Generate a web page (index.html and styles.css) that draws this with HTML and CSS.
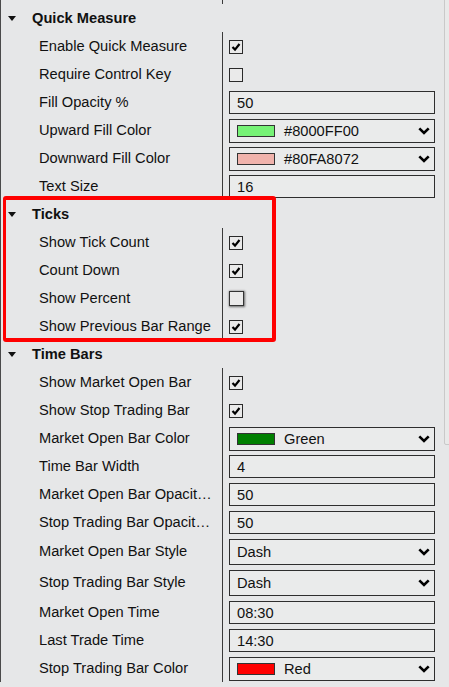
FILE: index.html
```html
<!DOCTYPE html>
<html>
<head>
<meta charset="utf-8">
<link rel="stylesheet" href="styles.css">
</head>
<body>
<div class="panel">
  <div class="rows">
    <div class="row prop stub"><div class="label"></div><div class="value"></div></div>

    <div class="row cat"><svg class="caret" width="8" height="5" viewBox="0 0 8 5"><polygon points="0,0 8,0 4,5"/></svg>Quick Measure</div>
    <div class="row prop"><div class="label">Enable Quick Measure</div><div class="value"><span class="check"><svg width="12" height="12" viewBox="0 0 12 12"><polyline points="2.5,6 5,8.6 9.5,3"/></svg></span></div></div>
    <div class="row prop"><div class="label">Require Control Key</div><div class="value"><span class="check"></span></div></div>
    <div class="row prop"><div class="label">Fill Opacity %</div><div class="value"><div class="field">50</div></div></div>
    <div class="row prop"><div class="label">Upward Fill Color</div><div class="value"><div class="field combo"><span class="swatch up"></span><span class="ctext">#8000FF00</span><svg class="chev" width="12" height="8" viewBox="0 0 12 8"><polyline points="1.3,1.3 6,6 10.7,1.3"/></svg></div></div></div>
    <div class="row prop"><div class="label">Downward Fill Color</div><div class="value"><div class="field combo"><span class="swatch down"></span><span class="ctext">#80FA8072</span><svg class="chev" width="12" height="8" viewBox="0 0 12 8"><polyline points="1.3,1.3 6,6 10.7,1.3"/></svg></div></div></div>
    <div class="row prop"><div class="label">Text Size</div><div class="value"><div class="field">16</div></div></div>

    <div class="row cat"><svg class="caret" width="8" height="5" viewBox="0 0 8 5"><polygon points="0,0 8,0 4,5"/></svg>Ticks</div>
    <div class="row prop"><div class="label">Show Tick Count</div><div class="value"><span class="check"><svg width="12" height="12" viewBox="0 0 12 12"><polyline points="2.5,6 5,8.6 9.5,3"/></svg></span></div></div>
    <div class="row prop"><div class="label">Count Down</div><div class="value"><span class="check"><svg width="12" height="12" viewBox="0 0 12 12"><polyline points="2.5,6 5,8.6 9.5,3"/></svg></span></div></div>
    <div class="row prop"><div class="label">Show Percent</div><div class="value"><span class="check focus"></span></div></div>
    <div class="row prop"><div class="label">Show Previous Bar Range</div><div class="value"><span class="check"><svg width="12" height="12" viewBox="0 0 12 12"><polyline points="2.5,6 5,8.6 9.5,3"/></svg></span></div></div>

    <div class="row cat"><svg class="caret" width="8" height="5" viewBox="0 0 8 5"><polygon points="0,0 8,0 4,5"/></svg>Time Bars</div>
    <div class="row prop"><div class="label">Show Market Open Bar</div><div class="value"><span class="check"><svg width="12" height="12" viewBox="0 0 12 12"><polyline points="2.5,6 5,8.6 9.5,3"/></svg></span></div></div>
    <div class="row prop"><div class="label">Show Stop Trading Bar</div><div class="value"><span class="check"><svg width="12" height="12" viewBox="0 0 12 12"><polyline points="2.5,6 5,8.6 9.5,3"/></svg></span></div></div>
    <div class="row prop"><div class="label">Market Open Bar Color</div><div class="value"><div class="field combo"><span class="swatch green"></span><span class="ctext">Green</span><svg class="chev" width="12" height="8" viewBox="0 0 12 8"><polyline points="1.3,1.3 6,6 10.7,1.3"/></svg></div></div></div>
    <div class="row prop"><div class="label">Time Bar Width</div><div class="value"><div class="field">4</div></div></div>
    <div class="row prop"><div class="label">Market Open Bar Opacit…</div><div class="value"><div class="field">50</div></div></div>
    <div class="row prop"><div class="label">Stop Trading Bar Opacit…</div><div class="value"><div class="field">50</div></div></div>
    <div class="row prop tall"><div class="label">Market Open Bar Style</div><div class="value"><div class="field combo big"><span class="ctext plain">Dash</span><svg class="chev" width="12" height="8" viewBox="0 0 12 8"><polyline points="1.3,1.3 6,6 10.7,1.3"/></svg></div></div></div>
    <div class="row prop tall"><div class="label">Stop Trading Bar Style</div><div class="value"><div class="field combo big"><span class="ctext plain">Dash</span><svg class="chev" width="12" height="8" viewBox="0 0 12 8"><polyline points="1.3,1.3 6,6 10.7,1.3"/></svg></div></div></div>
    <div class="row prop"><div class="label">Market Open Time</div><div class="value"><div class="field">08:30</div></div></div>
    <div class="row prop"><div class="label">Last Trade Time</div><div class="value"><div class="field">14:30</div></div></div>
    <div class="row prop"><div class="label">Stop Trading Bar Color</div><div class="value"><div class="field combo"><span class="swatch red"></span><span class="ctext">Red</span><svg class="chev" width="12" height="8" viewBox="0 0 12 8"><polyline points="1.3,1.3 6,6 10.7,1.3"/></svg></div></div></div>
  </div>
  <div class="thumb"></div>
  <div class="highlight"></div>
</div>
</body>
</html>
```

FILE: styles.css
```css
html, body {
  margin: 0;
  padding: 0;
  background: #e6e7e8;
  overflow: hidden;
}

body {
  font-family: "Liberation Sans", Arial, sans-serif;
  font-size: 14.67px;
  color: #111;
}

.panel {
  position: relative;
  width: 449px;
  height: 687px;
  overflow: hidden;
}

.rows {
  width: 444px;
  box-sizing: border-box;
  border-left: 1px solid #4a4a4a;
  display: flex;
  flex-direction: column;
}

.row {
  height: 28px;
  display: flex;
  align-items: stretch;
}

.row.stub {
  height: 4px;
}

.row.tall {
  height: 31px;
}

.cat {
  align-items: center;
  font-weight: bold;
}

.caret {
  margin-left: 7px;
  margin-right: 16px;
  fill: #111;
}

.label {
  width: 222px;
  flex: none;
  box-sizing: border-box;
  padding-left: 38px;
  padding-right: 6px;
  border-right: 1px solid #3a3a3a;
  white-space: nowrap;
  overflow: hidden;
  line-height: 28px;
}

.tall .label {
  line-height: 31px;
}

.value {
  flex: 1;
  display: flex;
  align-items: center;
  padding-left: 6px;
}

.check {
  width: 14px;
  height: 14px;
  box-sizing: border-box;
  border: 1px solid #2a2a2a;
  background: #eaeaea;
  display: flex;
  align-items: center;
  justify-content: center;
  margin-top: 1px;
}

.check svg polyline {
  fill: none;
  stroke: #000;
  stroke-width: 2.2;
}

.check.focus {
  width: 15px;
  height: 15px;
  border-color: #333;
  box-shadow: 0 0 2px 0.5px rgba(0, 0, 0, 0.55);
}

.field {
  width: 206px;
  height: 23px;
  box-sizing: border-box;
  border: 1px solid #2e2e2e;
  background: #eaebeb;
  padding-left: 7px;
  display: flex;
  align-items: center;
  margin-top: 1px;
}

.combo {
  height: 24px;
  padding-right: 4px;
}

.combo.big {
  height: 26px;
}

.swatch {
  width: 38px;
  height: 12px;
  box-sizing: border-box;
  border: 1px solid #333;
  margin-right: 9px;
  flex: none;
}

.swatch.up { background: #76f276; }
.swatch.down { background: #f0b3ac; }
.swatch.green { background: #008000; }
.swatch.red { background: #ff0000; }

.ctext {
  flex: 1;
}

.chev polyline {
  fill: none;
  stroke: #000;
  stroke-width: 2.6;
}

.thumb {
  position: absolute;
  left: 444px;
  top: -4px;
  width: 12px;
  height: 449px;
  box-sizing: border-box;
  border: 1px solid #c9c9c9;
  border-radius: 2px;
  background: #e9e9e9;
}

.highlight {
  position: absolute;
  left: 3px;
  top: 196px;
  width: 273px;
  height: 146px;
  box-sizing: border-box;
  border: 4px solid #ff0000;
  border-left-width: 3px;
  border-radius: 3px;
}
```
